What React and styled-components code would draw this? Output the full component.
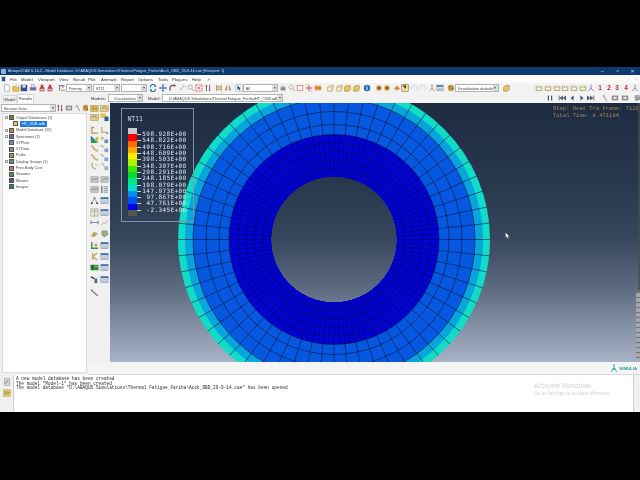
import React from "react";
import styled, { createGlobalStyle } from "styled-components";

const Global = createGlobalStyle`
  html, body { margin: 0; padding: 0; background: #000; }
  * { box-sizing: border-box; }
`;

const Screen = styled.div`
  width: 640px;
  height: 480px;
  background: #000;
  overflow: hidden;
  padding-top: 67px;
  font-family: "Liberation Sans", Arial, sans-serif;
`;

const Window = styled.div`
  width: 640px;
  height: 345px;
  display: flex;
  flex-direction: column;
  background: #f3f3f3;
  filter: blur(0.4px);
`;

const TitleBar = styled.div`
  height: 8px;
  flex: none;
  display: flex;
  align-items: center;
  background: #0c3a6f;
  color: #cfdcec;
  font-size: 3.85px;
  padding-left: 1px;
  white-space: nowrap;
`;

const TitleIcon = styled.span`
  width: 5px;
  height: 5px;
  margin-right: 2px;
  background: #8fb4de;
  border-radius: 1px;
`;

const WinControls = styled.div`
  margin-left: auto;
  display: flex;
  color: #dfe8f2;
  font-size: 6px;
  line-height: 8px;
  span { width: 15px; text-align: center; }
`;

const MenuBar = styled.div`
  height: 8px;
  flex: none;
  display: flex;
  align-items: center;
  background: #fbfbfb;
  padding-left: 1px;
  font-size: 4.3px;
  color: #333;
`;

const MenuLogo = styled.span`
  width: 5px;
  height: 6px;
  margin-right: 4px;
  background: #2b4f94;
  border: 1px solid #c9d4e8;
`;

const MenuItem = styled.span`
  width: ${(p) => p.$w}px;
  flex: none;
`;

const MiniControls = styled.div`
  margin-left: auto;
  display: flex;
  color: #aaa;
  span { width: 7.5px; text-align: center; }
`;

const Toolbar = styled.div`
  height: 10px;
  flex: none;
  display: flex;
  align-items: center;
  padding-left: ${(p) => p.$pad || 0}px;
  background: #f2f2f2;
  overflow: hidden;
`;

const Slot = styled.div`
  width: 8.7px;
  height: 9px;
  flex: none;
  display: flex;
  align-items: center;
  justify-content: center;
  svg { width: 8px; height: 8px; display: block; }
`;

const Spacer = styled.div`
  flex: none;
  width: ${(p) => p.$w}px;
`;

const ComboBox = styled.div`
  width: ${(p) => p.$w}px;
  height: 8px;
  flex: none;
  display: flex;
  align-items: center;
  background: #fff;
  border: 0.6px solid #b4b4b4;
  font-size: 3.9px;
  color: #444;
  padding-left: ${(p) => p.$inset || 1.5}px;
  white-space: nowrap;
  overflow: hidden;
`;

const ComboText = styled.span`
  flex: 1;
  overflow: hidden;
`;

const ComboArrow = styled.span`
  width: 5px;
  height: 100%;
  flex: none;
  background: #dcdcdc;
  display: flex;
  align-items: center;
  justify-content: center;
  &::after {
    content: "";
    border-left: 1.5px solid transparent;
    border-right: 1.5px solid transparent;
    border-top: 2px solid #555;
  }
`;

const RowLabel = styled.span`
  width: ${(p) => p.$w}px;
  flex: none;
  font-size: 4.2px;
  color: #333;
`;

const Main = styled.div`
  flex: 1;
  min-height: 0;
  display: flex;
`;

const Sidebar = styled.aside`
  width: 88px;
  flex: none;
  display: flex;
  flex-direction: column;
  background: #f0f0f0;
  padding: 1px 1px 2px 2px;
`;

const Tabs = styled.div`
  height: 9px;
  flex: none;
  display: flex;
  align-items: flex-end;
  padding-left: 1px;
`;

const Tab = styled.div`
  width: ${(p) => p.$w}px;
  height: ${(p) => (p.$active ? 9 : 8)}px;
  background: ${(p) => (p.$active ? "#fff" : "#f0f0f0")};
  border: 0.5px solid #d6d6d6;
  border-bottom: none;
  font-size: 4px;
  line-height: 8px;
  text-align: center;
  color: #333;
`;

const SessionRow = styled.div`
  height: 10px;
  flex: none;
  display: flex;
  align-items: center;
  margin-left: -1px;
`;

const Tree = styled.div`
  flex: 1;
  background: #fff;
  border: 0.5px solid #dcdcdc;
  padding-top: 0.5px;
`;

const TreeRow = styled.div`
  height: 6.3px;
  display: flex;
  align-items: center;
  font-size: 3.8px;
  color: #444;
  white-space: nowrap;
  padding-left: ${(p) => (p.$child ? 10 : 1.5)}px;
`;

const Expander = styled.span`
  width: 3px;
  height: 3px;
  flex: none;
  margin-right: 1.5px;
  border: ${(p) => (p.$on ? "0.5px solid #9a9a9a" : "none")};
`;

const TreeIcon = styled.span`
  width: 5px;
  height: 5px;
  flex: none;
  margin-right: 2px;
  background: ${(p) => p.$c};
  border: 0.5px solid #555;
`;

const Selected = styled.span`
  background: #1e78e0;
  color: #fff;
  padding: 0 2px;
  line-height: 6px;
`;

const Right = styled.div`
  flex: 1;
  min-width: 0;
  display: flex;
  flex-direction: column;
`;

const Workspace = styled.div`
  height: 259px;
  flex: none;
  display: flex;
`;

const Toolbox = styled.div`
  width: 22px;
  flex: none;
  padding: 0.5px 0 0 2px;
  background: #f0f0f0;
`;

const ToolboxRow = styled.div`
  display: flex;
  height: 9px;
  margin-top: ${(p) => p.$top || 0}px;
  gap: 1px;
  svg { width: 9px; height: 9px; display: block; }
`;

const Viewport = styled.div`
  position: relative;
  flex: 1;
  overflow: hidden;
  background: linear-gradient(#1e2c42 0%, #27374d 30%, #36465c 52%, #5e6c82 72%, #a9b3c7 100%);
`;

const Disc = styled.div`
  position: absolute;
  inset: 0;
  mask-image: radial-gradient(circle at 224px 136.5px, transparent 62.5px, #000 62.8px);
`;

const Mesh = styled.svg`
  display: block;
  width: 530px;
  height: 259px;
`;

const Legend = styled.div`
  position: absolute;
  left: 10.5px;
  top: 5px;
  width: 73.5px;
  height: 114px;
  border: 0.7px solid #8192ad;
  padding: 7px 0 0 6px;
  color: #e2e8f0;
  font-family: "DejaVu Sans Mono", monospace;
`;

const LegendTitle = styled.div`
  font-size: 6.4px;
  line-height: 6px;
  height: 12px;
  color: #d6dde8;
`;

const LegendBody = styled.div`
  display: flex;
`;

const Bar = styled.div`
  width: 9px;
  flex: none;
`;

const BarCell = styled.div`
  height: 6.3px;
  background: ${(p) => p.$c};
`;

const LegendLabels = styled.div`
  width: 50px;
  flex: none;
  padding-top: 3.15px;
`;

const LegendLabel = styled.div`
  height: 6.3px;
  line-height: 6.3px;
  font-size: 6px;
  letter-spacing: 0.4px;
  display: flex;
  justify-content: space-between;
  white-space: nowrap;
  &::before {
    content: "";
    width: 4px;
    height: 0.6px;
    margin-top: 3px;
    background: #cfd6e0;
  }
`;

const FrameInfo = styled.div`
  position: absolute;
  left: 443px;
  top: 3px;
  font-family: "Liberation Mono", monospace;
  font-size: 5.5px;
  line-height: 6.6px;
  color: #a08858;
  white-space: pre;
`;

const GhostEdge = styled.div`
  position: absolute;
  right: 0;
  top: 0;
  width: 2px;
  height: 187px;
  background: repeating-linear-gradient(#5a5648 0 1px, #3a4254 1px 2px);
  opacity: 0.7;
`;

const GhostStrip = styled.div`
  position: absolute;
  right: 0;
  top: 189px;
  width: 4px;
  height: 66px;
  background: repeating-linear-gradient(#8f6d6d 0 1px, #7fb08f 1px 2px, #b5a2c4 2px 3px, #9aa7b8 3px 5px);
`;

const Cursor = styled.svg`
  position: absolute;
  left: 395px;
  top: 129px;
  width: 5px;
  height: 7px;
`;

const StatusStrip = styled.div`
  flex: 1;
  display: flex;
  align-items: center;
  justify-content: flex-end;
  padding-right: 3px;
  background: #f4f4f4;
  border-bottom: 0.5px solid #d8d8d8;
`;

const Simulia = styled.div`
  display: flex;
  align-items: center;
  gap: 1px;
  color: #1f9a9c;
  font-size: 4.3px;
  font-weight: bold;
  svg { width: 8px; height: 9px; }
`;

const Console = styled.div`
  height: 37px;
  flex: none;
  display: flex;
  background: #f0f0f0;
`;

const ConsoleTools = styled.div`
  width: 13px;
  flex: none;
  display: flex;
  flex-direction: column;
  align-items: center;
  padding-top: 3px;
  gap: 3px;
  svg { width: 8px; height: 8px; display: block; }
`;

const ConsoleLog = styled.div`
  position: relative;
  width: 621px;
  flex: none;
  background: #fff;
  border-left: 0.5px solid #cfcfcf;
  border-right: 0.5px solid #cfcfcf;
  padding: 2px 0 0 2px;
  font-family: "Liberation Mono", monospace;
  font-size: 4.45px;
  line-height: 4.5px;
  color: #2a2a2a;
  white-space: pre;
`;

const Activate = styled.div`
  position: absolute;
  left: 520px;
  top: 7px;
  font-family: "Open Sans", sans-serif;
  color: #cfcfcf;
  font-size: 7px;
  line-height: 8px;
`;

const ActivateSub = styled.div`
  font-size: 4.7px;
  line-height: 7px;
`;

const T = "#c9b27c";
const Num = ({ n }) => (
  <text x="5" y="8" textAnchor="middle" fontSize="8" fontWeight="bold" fontFamily="Liberation Sans" fill="#c9242c">{n}</text>
);

const icons = {
  page: <path d="M2 1h4l2 2v6H2z" fill="#fff" stroke="#888" strokeWidth=".7" />,
  folder: <><path d="M1 3h3l1 1h4v5H1z" fill="#f0c64a" stroke="#a08020" strokeWidth=".6" /><path d="M5 1h3v3H5z" fill="#fff" stroke="#888" strokeWidth=".4" /></>,
  save: <><rect x="1" y="1" width="8" height="8" fill="#2f4f86" /><rect x="3" y="1.5" width="4" height="3" fill="#dfe7f3" /></>,
  print: <><rect x="1" y="4" width="8" height="4" fill="#6d6d9a" /><rect x="3" y="1" width="4" height="3" fill="#e6e6f0" stroke="#777" strokeWidth=".4" /></>,
  red: <><path d="M3.5 1h3v2l1.5 2v4H2V5l1.5-2z" fill="#b93a44" /><rect x="3" y="6" width="4" height="2" fill="#ddd" /></>,
  figure: <><path d="M1 2h7M2 2v6M6 2v3" stroke="#555" strokeWidth="1" fill="none" /><path d="M3 8h6" stroke="#c9a04a" strokeWidth="1.4" /></>,
  refresh: <><path d="M2 4a3 3 0 0 1 6 -1M8 6a3 3 0 0 1-6 1" stroke="#2a5fa8" strokeWidth="1.3" fill="none" /><path d="M7 1l2 2-2 1zM3 9L1 7l2-1z" fill="#2a5fa8" /></>,
  move: <><path d="M5 1v8M1 5h8" stroke="#2d62b0" strokeWidth="1.2" /><path d="M5 0l1.5 2h-3zM5 10l1.5-2h-3zM0 5l2-1.5v3zM10 5L8 3.5v3z" fill="#2d62b0" /></>,
  rotate: <><path d="M2 8a4 4 0 0 1 5-6" stroke="#2c3f6a" strokeWidth="1.3" fill="none" /><path d="M6 0l3 2-3 2z" fill="#c23a3a" /></>,
  wand: <><path d="M2 8l5-5" stroke="#999" strokeWidth="1" /><path d="M7 1v2M8 3h2" stroke="#d68a8a" strokeWidth=".7" /></>,
  lens: <><circle cx="4" cy="4" r="2.6" fill="none" stroke="#a5a5a5" strokeWidth=".9" /><path d="M6 6l3 3" stroke="#c77" strokeWidth="1.1" /></>,
  fit: <><rect x="1" y="1" width="8" height="8" fill="none" stroke="#cf3a3a" strokeWidth=".9" strokeDasharray="2 1" /><path d="M3 3l4 4M7 3l-4 4" stroke="#cf3a3a" strokeWidth=".8" /></>,
  arrows: <><path d="M3 1v8M7 1v8" stroke="#3b4a6b" strokeWidth="1" /><path d="M1.5 3L3 1l1.5 2zM5.5 7L7 9l1.5-2z" fill="#b8433b" /></>,
  grid: <path d="M2 1v8M8 1v8M2 3h6M2 5h6M2 7h6" stroke="#a88a44" strokeWidth=".9" fill="none" />,
  binoc: <path d="M1 8l2-6h1v6zM9 8L7 2H6v6z" fill="#b69a58" />,
  cursor: <><rect x="1" y="1" width="8" height="8" fill="#e7eefa" stroke="#8ba4cc" strokeWidth=".5" /><path d="M3 2v5l1.5-1 1 2 1-.5-1-2H7z" fill="#34456a" /></>,
  lock: <><rect x="2" y="4" width="6" height="4" fill="#8a8a8a" /><path d="M3.5 4V2.5h3V4" stroke="#999" fill="none" strokeWidth=".7" /></>,
  frame: <rect x="1.5" y="2" width="7" height="6" fill="none" stroke="#c46a55" strokeWidth=".8" />,
  redarrow: <><path d="M1 5h8M5 1v8" stroke="#d03a32" strokeWidth="1.1" /><path d="M1 1h2M7 9h2" stroke="#d6a54a" strokeWidth="1" /></>,
  orange: <><rect x="1" y="2" width="8" height="6" fill="#e9a04c" /><path d="M1 5h8" stroke="#b5542a" /></>,
  cube: <><path d="M2 4l2-2h5v5l-2 2H2z" fill="#f6f1dd" stroke="#b39a58" strokeWidth=".8" /><path d="M2 4h5v5M7 4l2-2" stroke="#b39a58" strokeWidth=".7" fill="none" /></>,
  cubeY: <path d="M2 4l2-2h5v5l-2 2H2z" fill="#e9c55e" stroke="#a78a35" strokeWidth=".8" />,
  info: <><circle cx="5" cy="5" r="4" fill="#2468b8" /><path d="M5 4v3.5" stroke="#fff" strokeWidth="1.2" /><circle cx="5" cy="2.6" r=".7" fill="#fff" /></>,
  eye: <><circle cx="5" cy="5" r="3.4" fill="#d59a3e" /><circle cx="5" cy="5" r="1.5" fill="#6b4a1e" /></>,
  ball: <path d="M1 6l4-4 4 4-4 2z" fill="#d9923c" />,
  black: <><rect x="1" y="1" width="8" height="8" fill="#f5d88a" stroke="#333" strokeWidth=".5" /><path d="M2 2h4v4z" fill="#222" /></>,
  undo: <path d="M2 7a3.5 3.5 0 1 1 6 0" stroke="#cfcfcf" strokeWidth="1" fill="none" />,
  triadT: <><path d="M5 1v4M5 5L2 9M5 5l3 4" stroke="#a38a55" strokeWidth="1" /><circle cx="5" cy="1.5" r="1" fill="#c9a04a" /></>,
  table: <><rect x="1" y="1.5" width="8" height="7" fill="#dfe6ee" stroke="#6f7f96" strokeWidth=".6" /><rect x="1" y="1.5" width="8" height="2" fill="#3d72a8" /><path d="M2 5.5h6M2 7h6" stroke="#8a97a8" strokeWidth=".6" /></>,
  palette: <><circle cx="5" cy="5" r="4" fill="#c79a48" /><circle cx="3.5" cy="3.5" r="1" fill="#8a3a8a" /><circle cx="6.5" cy="6" r="1" fill="#3a7a3a" /></>,
  corner: <path d="M1.5 2v6h7V3M4 2v3M6.5 2v3" stroke="#a8924e" strokeWidth="1" fill="none" />,
  one: <Num n="1" />, two: <Num n="2" />, three: <Num n="3" />, four: <Num n="4" />,
  triad: <path d="M5 1v4M5 5L1.5 9M5 5l3.5 4" stroke="#5578a0" strokeWidth="1" fill="none" />,
  pause: <path d="M3 2v6M7 2v6" stroke="#44546e" strokeWidth="1.5" />,
  first: <><path d="M1.5 2v6" stroke="#44546e" strokeWidth="1" /><path d="M6 2v6L2 5zM10 2v6L6 5z" fill="#44546e" /></>,
  back: <path d="M7 2v6L3 5z" fill="#44546e" />,
  fwd: <path d="M3 2v6l4-3z" fill="#44546e" />,
  last: <><path d="M8.5 2v6" stroke="#44546e" strokeWidth="1" /><path d="M0 2v6l4-3zM4 2v6l4-3z" fill="#44546e" /></>,
  pencil: <><path d="M3 1l4 8" stroke="#8f8f8f" strokeWidth="1.2" /><path d="M2 3h2" stroke="#c77" strokeWidth=".7" /></>,
  film: <><rect x="1" y="2" width="8" height="6" fill="#8d8d8d" /><rect x="3" y="3.5" width="4" height="3" fill="#ddd" /></>,
  book: <><path d="M2 2l6-1 1 6-6 2z" fill="#9b9b9b" /><path d="M3.5 3l3.5-.5" stroke="#ddd" strokeWidth=".6" /></>,
  gridY: <><rect x="0.5" y="1.5" width="9" height="7" fill="#e3c45c" stroke="#a88f3a" strokeWidth=".5" /><path d="M2 3.5h6M2 5h6M2 6.5h6" stroke="#7c6a35" strokeWidth=".8" strokeDasharray="1 .6" /></>,
  gridT: <><rect x="0.5" y="1.5" width="9" height="7" fill="#e0cf94" stroke="#a88f3a" strokeWidth=".5" /><path d="M2 5l3-2 3 3" stroke="#7c6a35" strokeWidth=".9" fill="none" /></>,
  gridB: <><rect x="0.5" y="0.5" width="6" height="5" fill="#e3c45c" /><rect x="5" y="4" width="4.5" height="5" fill="#2c5f86" /></>,
  bracket: <><path d="M2 1v7h7" stroke={T} strokeWidth="2" fill="none" /><path d="M2 1l3 1" stroke="#666" strokeWidth=".7" /></>,
  bracketB: <><path d="M2 1v6h5" stroke={T} strokeWidth="1.6" fill="none" /><circle cx="8" cy="8" r="1.2" fill="#6d94b8" /></>,
  contour: <><path d="M1 1l8 8H1z" fill="#2e9c5a" /><path d="M1 1l4 4H1z" fill="#2a6fc0" /><path d="M9 1v8L5 5z" fill="#d8b23a" /></>,
  contourB: <><path d="M1 2h3v3H1z" fill={T} /><path d="M5 5h4v4H5z" fill="#5f90ba" /></>,
  bent: <path d="M1 2c3 0 3 3 4 4s2 1 4 2" stroke={T} strokeWidth="2" fill="none" />,
  bentB: <><path d="M1 1l3 3" stroke={T} strokeWidth="1.6" /><path d="M5 5h4v4H5z" fill="#7ea3c4" /></>,
  hook: <><path d="M3 1c-2 3 0 7 4 7" stroke="#c7a66c" strokeWidth="1.4" fill="none" /><path d="M6 2l2 2" stroke="#c77" strokeWidth=".8" /></>,
  hookB: <><path d="M2 1l3 4" stroke="#aaa" strokeWidth="1.3" /><path d="M5 5h4v4H5z" fill="#93aec8" /></>,
  gray: <><rect x="1" y="2" width="8" height="6" fill="#c8c8c8" stroke="#777" strokeWidth=".5" /><path d="M2 6l3-2 2 1 2-2" stroke="#4a7a5a" strokeWidth=".7" fill="none" /></>,
  list: <><path d="M2 1v8" stroke="#444" strokeWidth="1" /><path d="M4 2h5M4 4h5M4 6h5M4 8h5" stroke="#6d86a0" strokeWidth=".9" /></>,
  tree: <><path d="M5 2L2 8M5 2l3 6" stroke="#6c7f96" strokeWidth=".8" fill="none" /><circle cx="5" cy="2" r="1" fill="#5f7186" /><circle cx="2" cy="8" r="1" fill="#333" /><circle cx="8" cy="8" r="1" fill="#333" /></>,
  plot: <><rect x="1" y="1" width="8" height="8" fill="#efe7d0" stroke="#8a8a8a" strokeWidth=".6" /><path d="M1 3.5h8M5 1v8" stroke="#8a8a8a" strokeWidth=".6" /></>,
  dim: <><path d="M1 5h8" stroke="#3f6ea8" strokeWidth=".8" /><path d="M1 3v4M9 3v4" stroke="#555" strokeWidth=".8" /></>,
  dots: <path d="M1 8l3-3 2 1 3-4" stroke="#d04a4a" strokeWidth="1" strokeDasharray="1 .8" fill="none" />,
  olive: <path d="M1 8l3-5 5 2-4 4z" fill="#b9a868" />,
  olive2: <path d="M2 2h6l1 4-4 3-3-2z" fill="#a0ab7a" stroke="#6e8aa8" strokeWidth=".5" />,
  slice: <><path d="M2 1v7h7" stroke="#3f8f46" strokeWidth="1.6" fill="none" /><path d="M5 3h3v3H5z" fill="#c7a040" /></>,
  kink: <path d="M3 1v8M3 5l5-4M3 5l5 4" stroke="#c3a25c" strokeWidth="1.4" />,
  green: <><rect x="0.5" y="2" width="9" height="6" fill="#2f8a3a" /><path d="M3 2v6" stroke="#123" strokeWidth=".8" /><path d="M5 4h4" stroke="#d7c24a" /></>,
  probe: <><path d="M1 2l4 2" stroke="#222" strokeWidth="1.4" /><path d="M5 4h3v5H5z" fill="#3a6ea0" /></>,
  ruler: <><path d="M1 2l8 7" stroke="#333" strokeWidth="1.1" /><path d="M3 2l-1 2M7 6l-1 2" stroke="#c8a050" strokeWidth=".8" /></>,
  docGreen: <><rect x="1.5" y="1" width="7" height="8" fill="#d8d8d8" stroke="#777" strokeWidth=".5" /><path d="M3 7l3-4" stroke="#4a8a4a" strokeWidth="1.2" /></>,
  prompt: <><rect x="0.5" y="1" width="9" height="8" fill="#e8d060" stroke="#9a8a30" strokeWidth=".5" /><path d="M2 3l1.2 2L2 7M4 3l1.2 2L4 7M6 3l1.2 2L6 7" stroke="#553" strokeWidth=".7" fill="none" /></>,
};

const Ico = ({ kind }) => <svg viewBox="0 0 10 10">{icons[kind]}</svg>;

const Combo = ({ w, inset, children }) => (
  <ComboBox $w={w} $inset={inset}>
    <ComboText>{children}</ComboText>
    <ComboArrow />
  </ComboBox>
);

// strings are icons, numbers are gaps, arrays are comboboxes
const renderItems = (items) =>
  items.map((it, i) => {
    if (typeof it === "number") return <Spacer key={i} $w={it} />;
    if (Array.isArray(it)) {
      if (it[0] === "label") return <RowLabel key={i} $w={it[1]}>{it[2]}</RowLabel>;
      return <Combo key={i} w={it[0]} inset={it[2]}>{it[1]}</Combo>;
    }
    return <Slot key={i}><Ico kind={it} /></Slot>;
  });

const mainTools = [
  "page", "folder", "save", "print", "red", "red", 2.65, "figure", [26, "Primary"], 1, [27, "NT11"], 1, [26, ""], 1.65,
  "refresh", 1.3, "move", 1.3, "rotate", 0.3, "wand", "lens", "fit", "arrows", 2.2, "grid", "binoc", 2.6, "cursor",
  [35, "All"], 0.3, "lock", "lens", "frame", "redarrow", "orange", 3.5, "cube", "cube", "cubeY", "cubeY", 2.2, "info",
  3.3, "eye", "eye", 0.6, "ball", "black", "undo", "undo", 0.2, "triadT", "table", 1.6, "palette", [44, "Visualization defaults"],
  2.3, "cubeY", 25, "corner", "corner", "corner", "corner", "corner", "corner", "triad", "one", "two", "three", "four", "triad",
];

const moduleTools = [
  3, ["label", 17, "Module:"], [35, "Visualization", 5], 5, ["label", 14, "Model:"],
  [121, "D:/ABAQUS Simulations/Thermal Fatigue_Fariha/HT_ODB.odb", 6], 262.65,
  "pause", 3.3, "first", 1.3, "back", 1.3, "fwd", 0.3, "last", 5.3, "pencil", 1.3, "film", 1.3, "film", 3.3, "book",
];

const menus = [
  ["File", 11], ["Model", 17], ["Viewport", 21], ["View", 14], ["Result", 15], ["Plot", 13], ["Animate", 20],
  ["Report", 17], ["Options", 20], ["Tools", 14], ["Plug-ins", 20], ["Help", 15], ["\u2197", 6],
];

const tree = [
  { t: "Output Databases (1)", c: "#5f8a3a", e: 1 },
  { t: "HT_ODB.odb", c: "#e8c94a", child: 1, sel: 1 },
  { t: "Model Database (12)", c: "#a58a3a", e: 1 },
  { t: "Spectrums (7)", c: "#7b5e9c", e: 1 },
  { t: "XYPlots", c: "#6f8fb0" },
  { t: "XYData", c: "#7a9a6a" },
  { t: "Paths", c: "#b08a4a" },
  { t: "Display Groups (1)", c: "#6a7f9a", e: 1 },
  { t: "Free Body Cuts", c: "#c77a4a" },
  { t: "Streams", c: "#4a8a5a" },
  { t: "Movies", c: "#6a4a8a" },
  { t: "Images", c: "#3a7a7a" },
];

const toolbox = [
  [0, "gridY", "gridT"], [0, "gridT", "gridB"],
  [4, "bracket", "bracketB"], [0, "contour", "contourB"], [0, "bent", "bentB"], [0, "bent", "bentB"], [0.5, "hook", "hookB"],
  [3.5, "gray", "gray"], [1, "gray", "list"],
  [2, "tree", "table"], [3, "plot", "table"], [1, "dim", "dots"], [2, "olive", "olive2"],
  [3, "slice", "table"], [2, "kink", "table"], [2, "green", "table"], [3, "probe", "table"], [4, "ruler"],
];

const legendColors = [
  "#c9c9c9", "#f40000", "#ff6a00", "#ffa800", "#ffec00", "#a8f500", "#3fe800", "#00dc30",
  "#00e888", "#00e0d0", "#0090f5", "#0050f5", "#0000e8", "#555555",
];

const legendValues = [
  "598.928E+00", "548.822E+00", "498.716E+00", "448.609E+00", "398.503E+00", "348.397E+00", "298.291E+00",
  "248.185E+00", "198.079E+00", "147.973E+00", "97.867E+00", "47.761E+00", "-2.345E+00",
];

const CX = 224;
const CY = 136.5;
const spoke = (deg, r0, r1) => {
  const a = (deg * Math.PI) / 180;
  return `M${CX + r0 * Math.cos(a)} ${CY + r0 * Math.sin(a)}L${CX + r1 * Math.cos(a)} ${CY + r1 * Math.sin(a)}`;
};

const range = (n, step) => Array.from({ length: n }, (_, i) => i * step);

const MeshDrawing = () => (
  <Mesh viewBox="0 0 530 259">
    <circle cx={CX} cy={CY} r="156" fill="#10dcc8" />
    <circle cx={CX} cy={CY} r="149" fill="#08a4dc" />
    <circle cx={CX} cy={CY} r="141" fill="#0658e0" />
    <circle cx={CX} cy={CY} r="105" fill="#0202d2" />
    <g fill="none" stroke="#04163a" strokeWidth="0.6">
      {[105, 115, 128, 141].map((r) => (
        <circle key={r} cx={CX} cy={CY} r={r} />
      ))}
      <path d={range(60, 6).map((d) => spoke(d, 105, 156)).join("")} />
    </g>
    <g fill="none" stroke="#02063c" strokeWidth="0.55" strokeOpacity="0.8">
      {[71, 79.5, 88, 96.5].map((r) => (
        <circle key={r} cx={CX} cy={CY} r={r} />
      ))}
      <path d={range(120, 3).map((d) => spoke(d, 62.5, 105)).join("")} />
    </g>
  </Mesh>
);

export default function App() {
  return (
    <>
      <Global />
      <Screen>
        <Window>
          <TitleBar>
            <TitleIcon />
            Abaqus/CAE 6.14-2 - Model Database: D:\ABAQUS Simulations\Thermal Fatigue_Fariha\Acck_OBD_29-9-14.cae [Viewport: 1]
            <WinControls>
              <span>–</span>
              <span>▫</span>
              <span>×</span>
            </WinControls>
          </TitleBar>
          <MenuBar>
            <MenuLogo />
            {menus.map(([m, w]) => (
              <MenuItem key={m} $w={w}>{m}</MenuItem>
            ))}
            <MiniControls>
              <span>-</span>
              <span>▫</span>
              <span>×</span>
            </MiniControls>
          </MenuBar>
          <Toolbar $pad={2.6}>{renderItems(mainTools)}</Toolbar>
          <Main>
            <Sidebar>
              <Tabs>
                <Tab $w={14}>Model</Tab>
                <Tab $w={17} $active>Results</Tab>
              </Tabs>
              <SessionRow>
                <Combo w={55}>Session Data</Combo>
                <Slot><Ico kind="arrows" /></Slot>
                <Slot><Ico kind="film" /></Slot>
                <Slot><Ico kind="pencil" /></Slot>
                <Slot><Ico kind="palette" /></Slot>
              </SessionRow>
              <Tree>
                {tree.map((row) => (
                  <TreeRow key={row.t} $child={row.child}>
                    {!row.child && <Expander $on={row.e} />}
                    <TreeIcon $c={row.c} />
                    {row.sel ? <Selected>{row.t}</Selected> : row.t}
                  </TreeRow>
                ))}
              </Tree>
            </Sidebar>
            <Right>
              <Toolbar>{renderItems(moduleTools)}</Toolbar>
              <Workspace>
                <Toolbox>
                  {toolbox.map(([top, a, b], i) => (
                    <ToolboxRow key={i} $top={top}>
                      <Ico kind={a} />
                      {b && <Ico kind={b} />}
                    </ToolboxRow>
                  ))}
                </Toolbox>
                <Viewport>
                  <Disc>
                    <MeshDrawing />
                  </Disc>
                  <Legend>
                    <LegendTitle>NT11</LegendTitle>
                    <LegendBody>
                      <Bar>
                        {legendColors.map((c, i) => (
                          <BarCell key={i} $c={c} />
                        ))}
                      </Bar>
                      <LegendLabels>
                        {legendValues.map((v) => (
                          <LegendLabel key={v}>{v}</LegendLabel>
                        ))}
                      </LegendLabels>
                    </LegendBody>
                  </Legend>
                  <FrameInfo>{"Step: Heat Tra Frame: 7120\nTotal Time: 8.471184"}</FrameInfo>
                  <GhostEdge />
                  <GhostStrip />
                  <Cursor viewBox="0 0 5 7">
                    <path d="M0.5 0.5v5.5l1.3-1.2 1 2 1-.5-1-2h1.7z" fill="#fff" stroke="#333" strokeWidth="0.3" />
                  </Cursor>
                </Viewport>
              </Workspace>
              <StatusStrip>
                <Simulia>
                  <svg viewBox="0 0 8 9">
                    <path d="M4 1v3M4 4L1 8M4 4l3 4M2 5h4" stroke="#1f9a9c" strokeWidth="0.8" fill="none" />
                    <circle cx="4" cy="1" r="0.8" fill="#1f9a9c" />
                  </svg>
                  SIMULIA
                </Simulia>
              </StatusStrip>
            </Right>
          </Main>
          <Console>
            <ConsoleTools>
              <Ico kind="docGreen" />
              <Ico kind="prompt" />
            </ConsoleTools>
            <ConsoleLog>
              {'A new model database has been created\nThe model "Model-1" has been created\nThe model database "D:\\ABAQUS Simulations\\Thermal Fatigue_Fariha\\Acck_OBD_29-9-14.cae" has been opened'}
              <Activate>
                Activate Windows
                <ActivateSub>Go to Settings to activate Windows.</ActivateSub>
              </Activate>
            </ConsoleLog>
          </Console>
        </Window>
      </Screen>
    </>
  );
}
